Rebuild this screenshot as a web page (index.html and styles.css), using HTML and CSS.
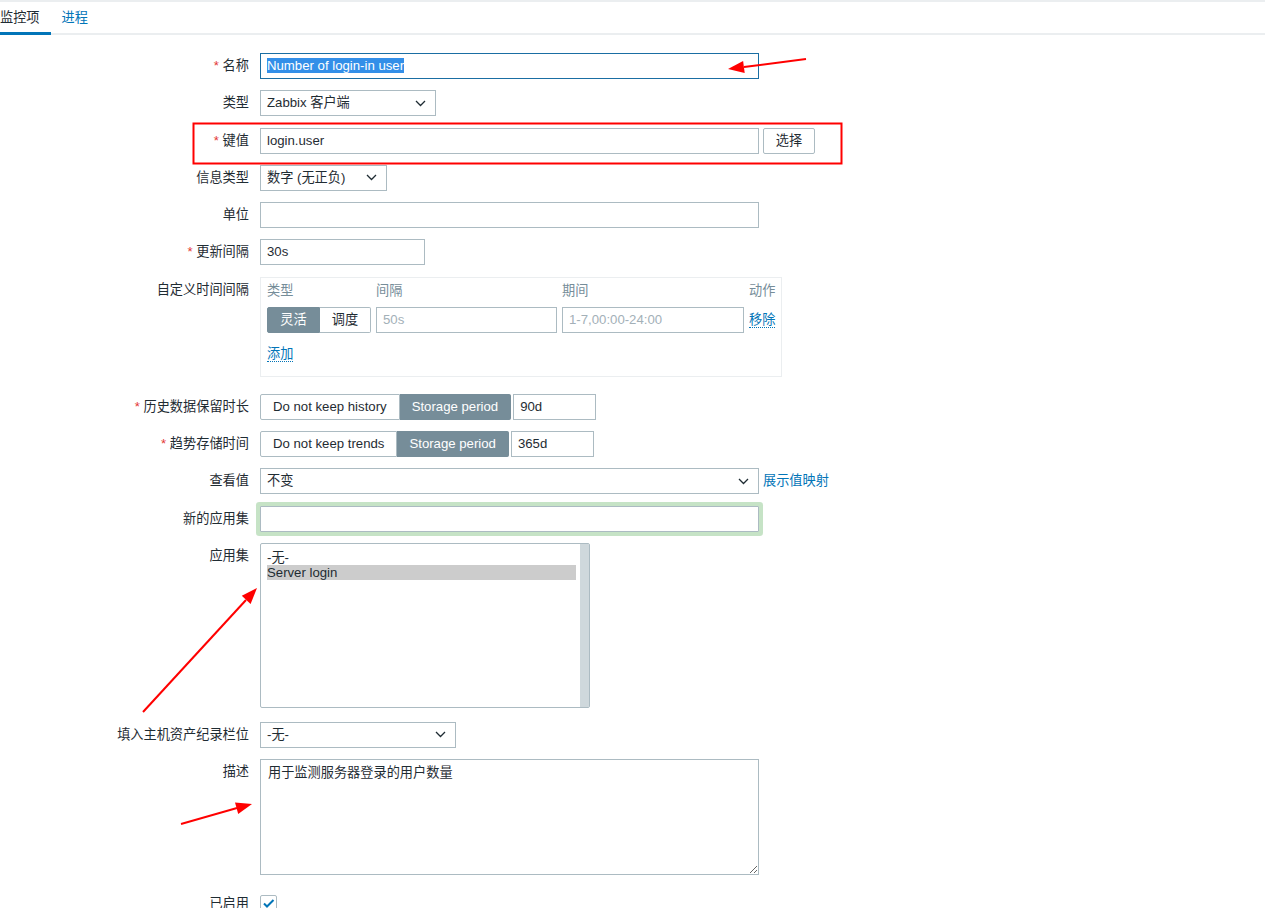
FILE: index.html
```html
<!DOCTYPE html>
<html lang="zh-CN">
<head>
  <meta charset="UTF-8">
  <title>监控项</title>
  <link rel="stylesheet" href="styles.css">
</head>
<body>
  <nav class="tabs">
    <a class="tab active">监控项</a>
    <a class="tab">进程</a>
  </nav>

  <form class="item-form">
    <ul class="form-list">
      <li class="form-row">
        <label class="form-label"><span class="req">*</span> 名称</label>
        <div class="form-field">
          <div class="input w-wide focused"><span class="selected">Number of login-in user</span></div>
        </div>
      </li>
      <li class="form-row">
        <label class="form-label">类型</label>
        <div class="form-field">
          <div class="input select w-type">Zabbix 客户端
            <svg class="chevron" width="11" height="7" viewBox="0 0 11 7"><path d="M1 1l4.5 4.5L10 1" /></svg>
          </div>
        </div>
      </li>
      <li class="form-row">
        <label class="form-label"><span class="req">*</span> 键值</label>
        <div class="form-field">
          <div class="input w-wide">login.user</div>
          <button type="button" class="btn-alt">选择</button>
        </div>
      </li>
      <li class="form-row">
        <label class="form-label">信息类型</label>
        <div class="form-field">
          <div class="input select w-info">数字 (无正负)
            <svg class="chevron" width="11" height="7" viewBox="0 0 11 7"><path d="M1 1l4.5 4.5L10 1" /></svg>
          </div>
        </div>
      </li>
      <li class="form-row">
        <label class="form-label">单位</label>
        <div class="form-field">
          <div class="input w-wide"></div>
        </div>
      </li>
      <li class="form-row">
        <label class="form-label"><span class="req">*</span> 更新间隔</label>
        <div class="form-field">
          <div class="input w-delay">30s</div>
        </div>
      </li>
      <li class="form-row row-intervals">
        <label class="form-label">自定义时间间隔</label>
        <div class="form-field">
          <div class="intervals">
            <div class="int-head">类型</div>
            <div class="int-head">间隔</div>
            <div class="int-head">期间</div>
            <div class="int-head">动作</div>

            <div class="seg">
              <span class="seg-btn on">灵活</span>
              <span class="seg-btn">调度</span>
            </div>
            <div class="input placeholder">50s</div>
            <div class="input placeholder">1-7,00:00-24:00</div>
            <div class="int-action"><a class="link">移除</a></div>

            <div class="int-add"><a class="link">添加</a></div>
          </div>
        </div>
      </li>
      <li class="form-row">
        <label class="form-label"><span class="req">*</span> 历史数据保留时长</label>
        <div class="form-field">
          <div class="seg">
            <span class="seg-btn">Do not keep history</span>
            <span class="seg-btn on">Storage period</span>
          </div>
          <div class="input w-small">90d</div>
        </div>
      </li>
      <li class="form-row">
        <label class="form-label"><span class="req">*</span> 趋势存储时间</label>
        <div class="form-field">
          <div class="seg">
            <span class="seg-btn">Do not keep trends</span>
            <span class="seg-btn on">Storage period</span>
          </div>
          <div class="input w-small">365d</div>
        </div>
      </li>
      <li class="form-row">
        <label class="form-label">查看值</label>
        <div class="form-field">
          <div class="input select w-wide">不变
            <svg class="chevron" width="11" height="7" viewBox="0 0 11 7"><path d="M1 1l4.5 4.5L10 1" /></svg>
          </div>
          <a class="link-plain">展示值映射</a>
        </div>
      </li>
      <li class="form-row">
        <label class="form-label">新的应用集</label>
        <div class="form-field">
          <div class="input w-wide glow"></div>
        </div>
      </li>
      <li class="form-row row-listbox">
        <label class="form-label">应用集</label>
        <div class="form-field">
          <div class="listbox">
            <div class="listbox-options">
              <div class="option">-无-</div>
              <div class="option picked">Server login</div>
            </div>
            <div class="listbox-scroll"></div>
          </div>
        </div>
      </li>
      <li class="form-row">
        <label class="form-label">填入主机资产纪录栏位</label>
        <div class="form-field">
          <div class="input select w-inventory">-无-
            <svg class="chevron" width="11" height="7" viewBox="0 0 11 7"><path d="M1 1l4.5 4.5L10 1" /></svg>
          </div>
        </div>
      </li>
      <li class="form-row row-desc">
        <label class="form-label">描述</label>
        <div class="form-field">
          <textarea class="textarea">用于监测服务器登录的用户数量</textarea>
        </div>
      </li>
      <li class="form-row row-check">
        <label class="form-label">已启用</label>
        <div class="form-field">
          <span class="checkbox">
            <svg width="15" height="15" viewBox="0 0 15 15"><path d="M3 7.5l3 3L12.5 4" /></svg>
          </span>
        </div>
      </li>
    </ul>
  </form>

  <!-- red annotations drawn over the screenshot -->
  <svg class="marks" width="1265" height="908" viewBox="0 0 1265 908">
    <rect x="193.5" y="121.5" width="648" height="40" />
    <line x1="806" y1="57" x2="744" y2="65" />
    <polygon points="728,67 744.7,71 743.1,59" />
    <line x1="143" y1="710" x2="246" y2="598" />
    <polygon points="257,586 250.6,601.9 241.8,593.7" />
    <line x1="181" y1="822" x2="237" y2="806" />
    <polygon points="252,802 238.2,812.1 235,800.5" />
  </svg>
</body>
</html>
```

FILE: styles.css
```css
body {
  margin: 0;
  border-top: 2px solid #ebeef0;
  font-family: "Liberation Sans", "Noto Sans CJK SC", sans-serif;
  font-size: 13.2px;
  line-height: 16px;
  color: #1f2c33;
  background: #fff;
  position: relative;
}

/* tabs */
.tabs {
  display: flex;
  margin-left: -11px;
  height: 31px;
  border-bottom: 2px solid #ebeef0;
}

.tab {
  position: relative;
  padding: 0 11px;
  line-height: 31px;
  color: #0275b8;
}

.tab.active {
  color: #1f2c33;
}

.tab.active::after {
  content: "";
  position: absolute;
  left: 0;
  right: 0;
  bottom: -2px;
  height: 3px;
  background: #0275b8;
}

/* form */
.form-list {
  list-style: none;
  margin: 0;
  padding: 18px 0 0;
}

.form-row {
  display: flex;
  margin-bottom: 11.3px;
}

.form-label {
  flex: 0 0 260px;
  box-sizing: border-box;
  padding: 5px 11px 0 0;
  text-align: right;
  white-space: nowrap;
}

.req {
  color: #e33734;
}

.form-field {
  display: flex;
  align-items: center;
}

.input {
  box-sizing: border-box;
  height: 26px;
  border: 1px solid #acbbc2;
  padding: 0 6px;
  line-height: 24px;
  white-space: nowrap;
  background: #fff;
}

.input.focused {
  border-color: #1a6ea3;
}

.selected {
  background: #338fe8;
  color: #fff;
}

.select {
  display: flex;
  align-items: center;
  justify-content: space-between;
  padding-right: 9px;
}

.chevron path {
  fill: none;
  stroke: #1f2c33;
  stroke-width: 1.3;
}

.w-wide { width: 499px; }
.w-type { width: 176px; }
.w-info { width: 127px; }
.w-delay { width: 165px; }
.w-small { width: 83px; margin-left: 2px; }
.w-inventory { width: 196px; }

.btn-alt {
  margin-left: 4px;
  width: 52px;
  height: 26px;
  border: 1px solid #acbbc2;
  border-radius: 2px;
  background: #fff;
  font: inherit;
  color: #1f2c33;
}

/* segmented radio */
.seg {
  display: flex;
}

.seg-btn {
  box-sizing: border-box;
  height: 26px;
  padding: 0 12px;
  line-height: 24px;
  border: 1px solid #acbbc2;
  white-space: nowrap;
}

.seg-btn:first-child {
  border-radius: 2px 0 0 2px;
}

.seg-btn + .seg-btn {
  border-left: none;
}

.seg-btn:last-child {
  border-radius: 0 2px 2px 0;
}

.seg-btn.on {
  background: #768d99;
  border-color: #768d99;
  color: #fff;
}

/* custom intervals */
.row-intervals {
  margin-bottom: 17px;
}

.intervals {
  box-sizing: border-box;
  width: 522px;
  height: 100px;
  border: 1px solid #ebeef0;
  padding: 5px 0 0 6px;
  display: grid;
  grid-template-columns: 104px 181px 182px 30px;
  grid-template-rows: 16px 26px 16px;
  column-gap: 5px;
  row-gap: 8px;
  align-content: start;
  white-space: nowrap;
}

.int-head {
  color: #768d99;
}

.intervals .seg-btn {
  padding: 0;
  text-align: center;
}

.intervals .seg-btn:first-child {
  width: 53px;
}

.intervals .seg-btn:last-child {
  width: 51px;
}

.placeholder {
  color: #a3b0b8;
}

.int-action {
  line-height: 26px;
}

.int-add {
  grid-column: 1 / -1;
  margin-top: 5px;
}

.link {
  color: #0275b8;
  border-bottom: 1px dotted #0275b8;
}

.link-plain {
  margin-left: 4px;
  color: #0275b8;
}

.glow {
  box-shadow: 0 0 0 4px #c6e3c6;
  border-radius: 1px;
}

/* application list */
.row-listbox {
  margin-bottom: 14px;
}

.listbox {
  display: flex;
  box-sizing: border-box;
  width: 330px;
  height: 165px;
  border: 1px solid #acbbc2;
  border-radius: 2px;
}

.listbox-options {
  flex: 1;
  padding: 6px 4px 0 6px;
}

.option {
  line-height: 15px;
}

.option.picked {
  background: #cccccc;
}

.listbox-scroll {
  width: 9px;
  background: #cfd8dc;
}

/* description */
.row-desc {
  margin-bottom: 19px;
}

.textarea {
  box-sizing: border-box;
  width: 499px;
  height: 116px;
  border: 1px solid #acbbc2;
  padding: 5px 7px;
  font: inherit;
  color: #1f2c33;
  resize: both;
  display: block;
}

.row-check .form-label {
  padding-top: 2px;
}

.checkbox {
  display: flex;
  align-items: center;
  justify-content: center;
  box-sizing: border-box;
  width: 17px;
  height: 17px;
  border: 1px solid #acbbc2;
  border-radius: 2px;
}

.checkbox path {
  fill: none;
  stroke: #0275b8;
  stroke-width: 2;
}

/* annotations */
.marks {
  position: absolute;
  top: 0;
  left: 0;
  pointer-events: none;
}

.marks rect,
.marks line {
  fill: none;
  stroke: #ff0000;
  stroke-width: 2;
}

.marks polygon {
  fill: #ff0000;
}
```
